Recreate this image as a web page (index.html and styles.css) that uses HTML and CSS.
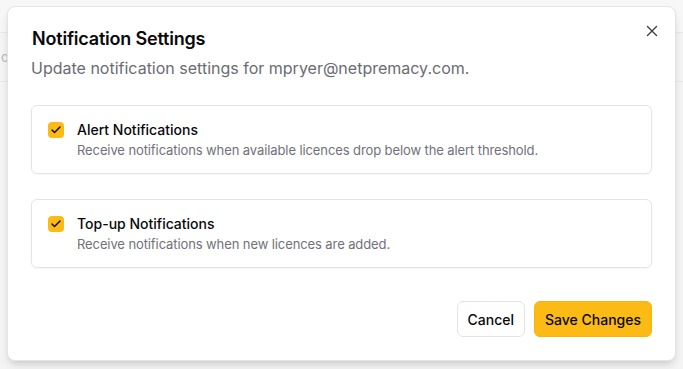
FILE: index.html
```html
<!DOCTYPE html>
<html lang="en">
<head>
<meta charset="utf-8">
<title>Notification Settings</title>
<link rel="stylesheet" href="styles.css">
</head>
<body>
<div class="page">
  <div class="page-bar"></div>
  <div class="page-row"><span class="page-text">or</span></div>
</div>

<div class="dialog" role="dialog" aria-labelledby="dlg-title">
  <button class="close" aria-label="Close">
    <svg width="16" height="16" viewBox="0 0 16 16" fill="none" stroke="currentColor" stroke-width="1.4" stroke-linecap="round"><path d="M3.5 3.5l9 9M12.5 3.5l-9 9"/></svg>
  </button>
  <div class="header">
    <h2 class="title" id="dlg-title">Notification Settings</h2>
    <p class="subtitle">Update notification settings for mpryer@netpremacy.com.</p>
  </div>

  <div class="options">
    <label class="option">
      <span class="check">
        <svg width="12" height="12" viewBox="0 0 24 24" fill="none" stroke="currentColor" stroke-width="3" stroke-linecap="round" stroke-linejoin="round"><path d="M20 6 9 17l-5-5"/></svg>
      </span>
      <span class="option-text">
        <span class="option-label">Alert Notifications</span>
        <span class="option-desc">Receive notifications when available licences drop below the alert threshold.</span>
      </span>
    </label>
    <label class="option">
      <span class="check">
        <svg width="12" height="12" viewBox="0 0 24 24" fill="none" stroke="currentColor" stroke-width="3" stroke-linecap="round" stroke-linejoin="round"><path d="M20 6 9 17l-5-5"/></svg>
      </span>
      <span class="option-text">
        <span class="option-label">Top-up Notifications</span>
        <span class="option-desc">Receive notifications when new licences are added.</span>
      </span>
    </label>
  </div>

  <div class="footer">
    <button class="btn btn-outline">Cancel</button>
    <button class="btn btn-primary">Save Changes</button>
  </div>
</div>
</body>
</html>
```

FILE: styles.css
```css
* { box-sizing: border-box; }

html, body {
  margin: 0;
  padding: 0;
  width: 683px;
  height: 369px;
  overflow: hidden;
}

body {
  font-family: Inter, "Liberation Sans", sans-serif;
  background: #f4f4f4;
  color: #09090b;
  position: relative;
}

.page-bar {
  height: 33px;
  background: #f7f7f7;
  border-bottom: 1px solid #e8e8e8;
}

.page-row {
  height: 49px;
  border-bottom: 1px solid #e8e8e8;
  display: flex;
  align-items: center;
}

.page-text {
  font-size: 13px;
  color: #b8b8b8;
  margin-left: 1px;
}

.dialog {
  position: absolute;
  left: 7px;
  top: 6px;
  width: 669px;
  height: 355px;
  background: #ffffff;
  border: 1px solid #e4e4e7;
  border-radius: 8px;
  box-shadow: 0 6px 10px -2px rgba(0, 0, 0, 0.12), 0 3px 6px -3px rgba(0, 0, 0, 0.1);
  padding: 23px 23px;
  display: flex;
  flex-direction: column;
}

.close {
  position: absolute;
  top: 16px;
  right: 15px;
  width: 16px;
  height: 16px;
  padding: 0;
  border: none;
  background: none;
  color: #3f3f46;
  display: flex;
  align-items: center;
  justify-content: center;
}

.header {
  display: flex;
  flex-direction: column;
  gap: 8px;
}

.title {
  margin: 0;
  font-size: 18px;
  line-height: 18px;
  font-weight: 600;
  letter-spacing: -0.2px;
  padding-left: 1px;
}

.subtitle {
  margin: 0;
  font-size: 16px;
  line-height: 24px;
  color: #6b6b73;
}

.options {
  margin-top: 25px;
  display: flex;
  flex-direction: column;
  gap: 25px;
}

.option {
  display: flex;
  align-items: flex-start;
  gap: 13px;
  border: 1px solid #e4e4e7;
  border-radius: 6px;
  padding: 14px 16px 15px;
  box-shadow: 0 1px 2px rgba(0, 0, 0, 0.04);
}

.check {
  flex: none;
  width: 16px;
  height: 16px;
  margin-top: 2px;
  border-radius: 4px;
  background: #fcbb14;
  color: #111111;
  display: flex;
  align-items: center;
  justify-content: center;
}

.option-text {
  display: flex;
  flex-direction: column;
  gap: 2px;
}

.option-label {
  font-size: 14px;
  line-height: 20px;
  font-weight: 500;
}

.option-desc {
  font-size: 13px;
  line-height: 16px;
  letter-spacing: -0.1px;
  color: #71717a;
}

.footer {
  margin-top: auto;
  display: flex;
  justify-content: flex-end;
  gap: 9px;
}

.btn {
  font-family: Inter, "Liberation Sans", sans-serif;
  height: 36px;
  padding: 0 10px;
  border-radius: 6px;
  font-size: 14px;
  font-weight: 500;
  border: 1px solid #e4e4e7;
  color: #09090b;
  cursor: pointer;
}

.btn-outline {
  background: #ffffff;
}

.btn-primary {
  background: #fcbb14;
  border-color: #f5b40e;
}
```
